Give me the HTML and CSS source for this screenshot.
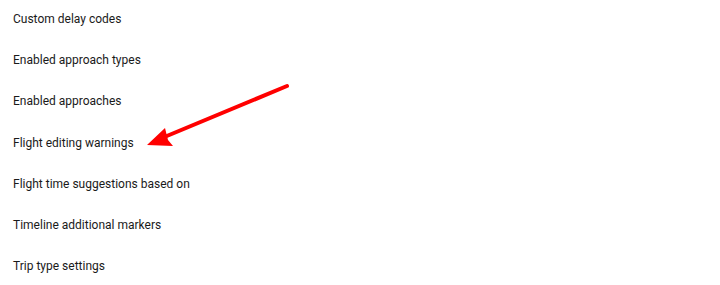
FILE: index.html
```html
<!DOCTYPE html>
<html lang="en">
<head>
  <meta charset="UTF-8" />
  <title>Settings</title>
  <link rel="stylesheet" href="styles.css">
</head>
<body>

  <!-- Settings list -->
  <ul class="settings-list">
    <li class="settings-item">Custom delay codes</li>
    <li class="settings-item">Enabled approach types</li>
    <li class="settings-item">Enabled approaches</li>
    <li class="settings-item">Flight editing warnings</li>
    <li class="settings-item">Flight time suggestions based on</li>
    <li class="settings-item">Timeline additional markers</li>
    <li class="settings-item">Trip type settings</li>
  </ul>

  <!-- Annotation arrow -->
  <svg class="arrow" width="720" height="285" viewBox="0 0 720 285">
    <line x1="287" y1="86" x2="162" y2="138" stroke="#ff0000" stroke-width="4" stroke-linecap="round" />
    <polygon points="147,145 165,128 168,140 173,146" fill="#ff0000" />
  </svg>

</body>
</html>
```

FILE: styles.css
```css
body {
  margin: 0;
  padding: 0;
  background-color: #ffffff;
  font-family: Roboto, "Noto Sans", sans-serif;
  color: #1a1a1a;
  width: 720px;
  height: 285px;
  overflow: hidden;
  position: relative;
}

.settings-list {
  list-style: none;
  margin: 0;
  padding: 0;
}

.settings-item {
  font-size: 12px;
  height: 41.2px;
  line-height: 38px;
  padding-left: 13px;
}

.arrow {
  position: absolute;
  left: 0;
  top: 0;
  pointer-events: none;
}
```
